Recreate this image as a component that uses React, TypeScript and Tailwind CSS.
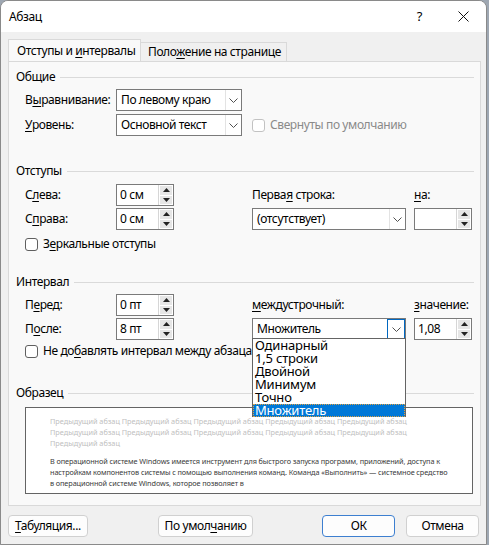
import React from "react";

const F = "font-['Noto_Sans',sans-serif]";

function U({ children }: { children: React.ReactNode }) {
  return <span className="underline underline-offset-[2px] decoration-[1px]">{children}</span>;
}

function Chevron() {
  return (
    <svg width="9" height="5" viewBox="0 0 9 5">
      <path d="M0.5 0.5 L4.5 4.5 L8.5 0.5" stroke="#505050" fill="none" strokeWidth="1" />
    </svg>
  );
}

function Select({ text, w, focused }: { text: string; w: string; focused?: boolean }) {
  return (
    <div className={`${w} h-[22px] border border-[#7a7a7a] bg-white flex items-stretch`}>
      <div className="flex-1 flex items-center pl-[4px] text-[12px] text-black">
        <span>{text}</span>
      </div>
      {focused ? (
        <div className="w-[18px] border border-[#0067c0] flex items-center justify-center">
          <Chevron />
        </div>
      ) : (
        <div className="w-[16px] border-l border-[#e3e3e3] flex items-center justify-center">
          <Chevron />
        </div>
      )}
    </div>
  );
}

function Tri({ up }: { up?: boolean }) {
  return (
    <svg width="7" height="4" viewBox="0 0 7 4">
      {up ? <path d="M0 4 L3.5 0 L7 4 Z" fill="#222" /> : <path d="M0 0 L3.5 4 L7 0 Z" fill="#222" />}
    </svg>
  );
}

function Spinner({ text }: { text: string }) {
  return (
    <div className="w-[58px] h-[22px] border border-[#7a7a7a] bg-white flex items-stretch">
      <div className="flex-1 flex items-center pl-[3px] text-[12px] text-black">
        <span>{text}</span>
      </div>
      <div className="w-[15px] flex flex-col gap-[1px] p-[1px] border-l border-[#d6d6d6] bg-white">
        <div className="flex-1 bg-[#e6e6e6] flex items-center justify-center">
          <Tri up />
        </div>
        <div className="flex-1 bg-[#e6e6e6] flex items-center justify-center">
          <Tri />
        </div>
      </div>
    </div>
  );
}

function Check({ disabled }: { disabled?: boolean }) {
  return (
    <div
      className={`w-[13px] h-[13px] rounded-[3px] border bg-white ${disabled ? "border-[#c2c2c2]" : "border-[#5f5f5f]"}`}
    />
  );
}

function Header({ children, mt }: { children: React.ReactNode; mt: string }) {
  return (
    <div className={`${mt} h-[16px] flex items-center`}>
      <span className="text-[12px] text-black pr-[5px]">{children}</span>
      <div className="flex-1 h-px bg-[#dadada]" />
    </div>
  );
}

function Button({ children, w, primary }: { children: React.ReactNode; w: string; primary?: boolean }) {
  return (
    <div
      className={`${w} h-[22px] rounded-[4px] bg-[#fdfdfd] border flex items-center justify-center text-[12px] text-black ${
        primary ? "border-[#3d7fd0]" : "border-[#d0d0d0]"
      }`}
    >
      <span>{children}</span>
    </div>
  );
}

export default function App() {
  const prev = "Предыдущий абзац Предыдущий абзац Предыдущий абзац Предыдущий абзац Предыдущий абзац";
  return (
    <div className={`w-[489px] h-[545px] bg-[#9ea7b2] ${F} tracking-[-0.4px] overflow-hidden`}>
      <div className="w-[487px] h-[545px] rounded-t-[8px] border border-[#8a8a8a] bg-[#f0f0f0] flex flex-col overflow-hidden">
        {/* title bar */}
        <div className="h-[31px] bg-white flex items-center pl-[8px] shrink-0">
          <span className="text-[12px] text-black">Абзац</span>
          <div className="flex-1" />
          <span className="text-[13px] text-black mr-[36px]">?</span>
          <svg width="11" height="11" viewBox="0 0 11 11" className="mr-[17px]">
            <path d="M0.5 0.5 L10.5 10.5 M10.5 0.5 L0.5 10.5" stroke="#111" strokeWidth="1" />
          </svg>
        </div>

        <div className="flex flex-col px-[7px] pt-[8px]">
          {/* tabs */}
          <div className="flex items-end h-[21px] relative z-10 whitespace-nowrap">
            <div className="w-[133px] h-[22px] bg-[#f9f9f9] border border-b-0 border-[#d9d9d9] flex items-center pl-[8px] text-[12px] text-black">
              <span>
                Отступы и <U>и</U>нтервалы
              </span>
            </div>
            <div className="w-[146px] h-[19px] bg-[#f0f0f0] border border-l-0 border-b-0 border-[#d9d9d9] flex items-center pl-[7px] text-[12px] text-black">
              <span>
                Поло<U>ж</U>ение на странице
              </span>
            </div>
          </div>

          {/* panel */}
          <div className="h-[445px] w-[473px] bg-[#f9f9f9] border border-[#d9d9d9] flex flex-col pl-[7px] pr-[6px] text-[12px] text-black">
            <Header mt="mt-[7px]">Общие</Header>
            <div className="pl-[9px] flex flex-col">
              <div className="mt-[4px] flex items-center h-[22px]">
                <div className="w-[91px]">
                  В<U>ы</U>равнивание:
                </div>
                <Select text="По левому краю" w="w-[126px]" />
              </div>
              <div className="mt-[3px] flex items-center h-[22px]">
                <div className="w-[91px]">
                  <U>У</U>ровень:
                </div>
                <Select text="Основной текст" w="w-[126px]" />
                <div className="ml-[10px]">
                  <Check disabled />
                </div>
                <span className="ml-[5px] text-[#8a8a8a]">Свернуты по умолчанию</span>
              </div>
            </div>

            <Header mt="mt-[27px]">Отступы</Header>
            <div className="pl-[9px] flex flex-col">
              <div className="mt-[5px] flex items-center h-[22px]">
                <div className="w-[91px]">
                  С<U>л</U>ева:
                </div>
                <Spinner text="0 см" />
                <div className="w-[78px]" />
                <div className="w-[162px]">
                  Перва<U>я</U> строка:
                </div>
                <div>
                  <U>н</U>а:
                </div>
              </div>
              <div className="mt-[2px] flex items-center h-[22px]">
                <div className="w-[91px]">
                  С<U>п</U>рава:
                </div>
                <Spinner text="0 см" />
                <div className="w-[78px]" />
                <Select text="(отсутствует)" w="w-[154px]" />
                <div className="ml-[8px]">
                  <Spinner text="" />
                </div>
              </div>
              <div className="mt-[6px] flex items-center h-[16px]">
                <Check />
                <span className="ml-[5px]">
                  З<U>е</U>ркальные отступы
                </span>
              </div>
            </div>

            <Header mt="mt-[22px]">Интервал</Header>
            <div className="pl-[9px] flex flex-col">
              <div className="mt-[4px] flex items-center h-[22px]">
                <div className="w-[91px]">
                  П<U>е</U>ред:
                </div>
                <Spinner text="0 пт" />
                <div className="w-[78px]" />
                <div className="w-[162px]">
                  <U>м</U>еждустрочный:
                </div>
                <div>
                  <U>з</U>начение:
                </div>
              </div>
              <div className="mt-[2px] flex items-center h-[22px]">
                <div className="w-[91px]">
                  П<U>о</U>сле:
                </div>
                <Spinner text="8 пт" />
                <div className="w-[78px]" />
                <div className="relative z-20">
                  <Select text="Множитель" w="w-[154px]" focused />
                  <div className="absolute left-0 top-[20px] w-[154px] h-[79px] bg-white border border-[#646464] flex flex-col text-[13px] leading-[13px] tracking-[-0.2px]">
                    <div className="h-[13px] pl-[2px]">Одинарный</div>
                    <div className="h-[13px] pl-[2px]">1,5 строки</div>
                    <div className="h-[13px] pl-[2px]">Двойной</div>
                    <div className="h-[13px] pl-[2px]">Минимум</div>
                    <div className="h-[13px] pl-[2px]">Точно</div>
                    <div className="h-[13px] pl-[2px] bg-[#0078d7] text-white outline outline-1 outline-dotted outline-[#e0a040] -outline-offset-1">
                      Множитель
                    </div>
                  </div>
                </div>
                <div className="ml-[8px]">
                  <Spinner text="1,08" />
                </div>
              </div>
              <div className="mt-[3px] flex items-center h-[16px] whitespace-nowrap">
                <Check />
                <span className="ml-[5px]">
                  Не до<U>б</U>авлять интервал между абзацами одного стиля
                </span>
              </div>
            </div>

            <Header mt="mt-[26px]">Образец</Header>
            <div className="pl-[9px]">
              <div className="mt-[6px] w-[448px] h-[87px] bg-white border border-[#646464] pl-[24px] pt-[8px] text-[7.3px] leading-[11px] tracking-normal whitespace-nowrap overflow-hidden">
                <div className="text-[#c0c0c0]">{prev}</div>
                <div className="text-[#c0c0c0]">{prev}</div>
                <div className="text-[#c0c0c0]">Предыдущий абзац</div>
                <div className="text-[#3a3a3a] mt-[7px] tracking-[-0.1px]">
                  В операционной системе Windows имеется инструмент для быстрого запуска программ, приложений, доступа к
                </div>
                <div className="text-[#3a3a3a] tracking-[-0.1px]">
                  настройкам компонентов системы с помощью выполнения команд. Команда «Выполнить» — системное средство
                </div>
                <div className="text-[#3a3a3a] tracking-[-0.1px]">в операционной системе Windows, которое позволяет в</div>
              </div>
            </div>
          </div>

          {/* buttons */}
          <div className="mt-[9px] flex items-center h-[22px]">
            <Button w="w-[80px]">
              <U>Т</U>абуляция...
            </Button>
            <div className="w-[70px]" />
            <Button w="w-[96px]">
              По умол<U>ч</U>анию
            </Button>
            <div className="w-[69px]" />
            <Button w="w-[73px]" primary>
              ОК
            </Button>
            <div className="w-[11px]" />
            <Button w="w-[73px]">Отмена</Button>
          </div>
        </div>
      </div>
    </div>
  );
}
